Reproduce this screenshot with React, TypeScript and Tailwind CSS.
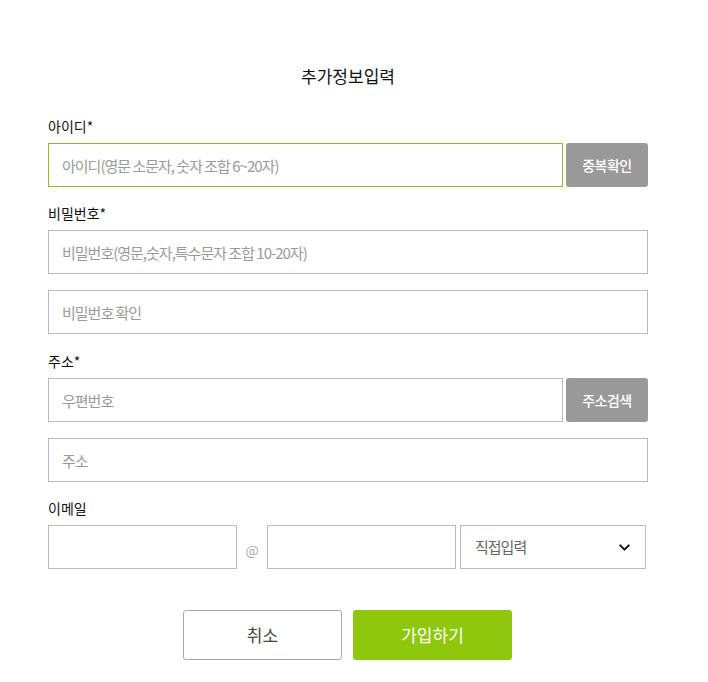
import { ChevronDown } from "lucide-react";

const font = { fontFamily: '"Noto Sans CJK KR", "Noto Sans", sans-serif' };

function Label({ children }: { children: React.ReactNode }) {
  return <div className="mb-[7px] text-[14px] leading-[20px] font-normal text-[#111]">{children}</div>;
}

function Field({ placeholder, focused, className }: { placeholder?: string; focused?: boolean; className?: string }) {
  return (
    <input
      placeholder={placeholder}
      className={
        "h-[44px] border bg-white px-[13px] text-[15px] tracking-[-1px] text-[#333] outline-none placeholder:text-[#9a9a9a] " +
        (focused ? "border-[#8dc21f] " : "border-[#bbbbbb] ") +
        (className ?? "")
      }
      style={font}
    />
  );
}

function GrayButton({ children }: { children: React.ReactNode }) {
  return (
    <button className="ml-[3px] h-[44px] w-[82px] shrink-0 rounded-[3px] bg-[#999999] text-[14px] font-medium tracking-[-0.5px] text-white">
      {children}
    </button>
  );
}

export default function App() {
  return (
    <div className="min-h-screen bg-white" style={font}>
      <div className="ml-[48px] w-[600px] pt-[63px]">
        <h1 className="text-center text-[17px] leading-[26px] font-normal text-[#111]">추가정보입력</h1>

        <div className="mt-[27px]">
          <Label>아이디*</Label>
          <div className="flex">
            <Field placeholder="아이디(영문 소문자, 숫자 조합 6~20자)" focused className="w-[515px]" />
            <GrayButton>중복확인</GrayButton>
          </div>
        </div>

        <div className="mt-[16px]">
          <Label>비밀번호*</Label>
          <Field placeholder="비밀번호(영문,숫자,특수문자 조합 10-20자)" className="w-[600px]" />
          <Field placeholder="비밀번호 확인" className="mt-[16px] w-[600px]" />
        </div>

        <div className="mt-[17px]">
          <Label>주소*</Label>
          <div className="flex">
            <Field placeholder="우편번호" className="w-[515px]" />
            <GrayButton>주소검색</GrayButton>
          </div>
          <Field placeholder="주소" className="mt-[16px] w-[600px]" />
        </div>

        <div className="mt-[16px]">
          <Label>이메일</Label>
          <div className="flex items-end">
            <Field className="w-[189px]" />
            <span className="w-[30px] pb-[8px] text-center text-[14px] text-[#aaaaaa]">@</span>
            <Field className="w-[189px]" />
            <div className="ml-[4px] flex h-[44px] w-[186px] items-center justify-between border border-[#bbbbbb] pl-[14px] pr-[12px]">
              <span className="text-[15px] tracking-[-1px] text-[#666]">직접입력</span>
              <ChevronDown size={17} strokeWidth={2.8} className="text-[#111]" />
            </div>
          </div>
        </div>

        <div className="mt-[41px] flex justify-center gap-[11px] pr-[1px]">
          <button className="h-[50px] w-[159px] rounded-[3px] border border-[#aaaaaa] bg-white text-[17px] text-[#444]">
            취소
          </button>
          <button className="h-[50px] w-[159px] rounded-[3px] bg-[#8fc70d] text-[17px] text-white">
            가입하기
          </button>
        </div>
      </div>
    </div>
  );
}
